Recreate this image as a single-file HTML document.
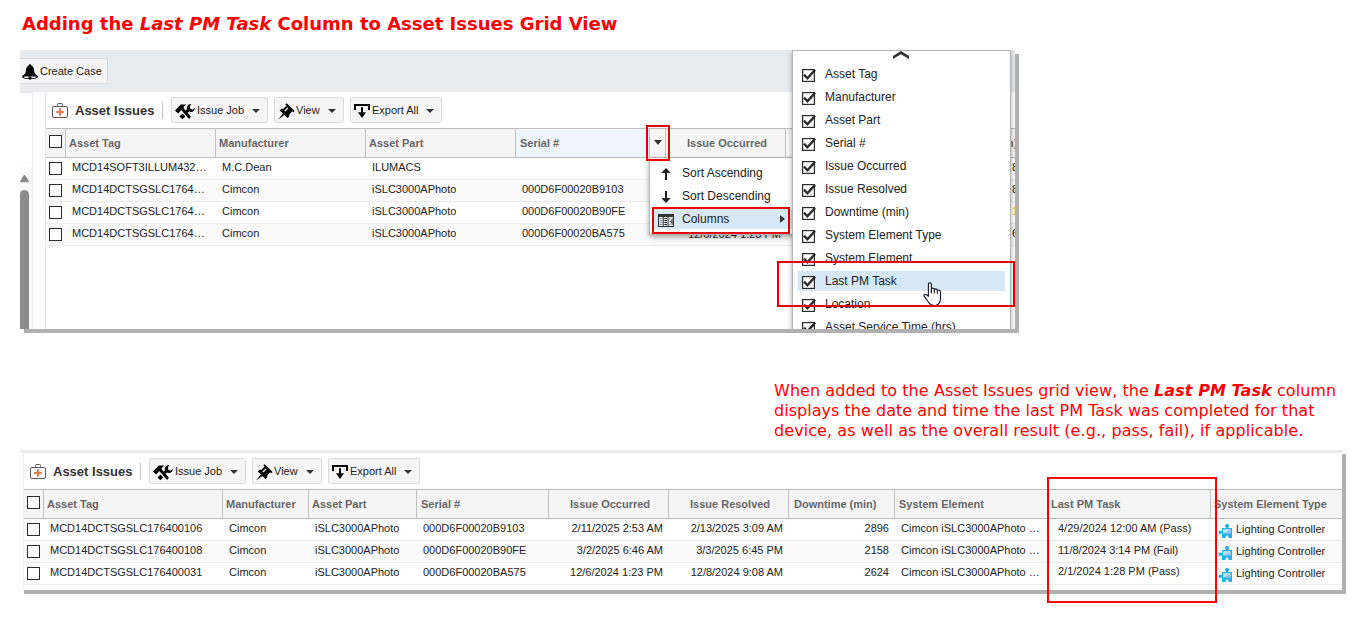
<!DOCTYPE html>
<html lang="en">
<head>
<meta charset="utf-8">
<title>Adding the Last PM Task Column to Asset Issues Grid View</title>
<style>
*{box-sizing:border-box}
html,body{margin:0;padding:0;background:#fff}
body{width:1362px;height:622px;position:relative;overflow:hidden;font-family:"Liberation Sans",sans-serif;font-size:11px;color:#222}
.abs{position:absolute}
h1{position:absolute;left:22px;top:13px;margin:0;font:bold 18px/22px "DejaVu Sans",sans-serif;color:#f00;white-space:nowrap}
.note{position:absolute;left:774px;top:381px;margin:0;font:16px/20px "DejaVu Sans",sans-serif;color:#f00;white-space:nowrap;letter-spacing:.05px}
.shot{position:absolute;background:#fff;overflow:hidden}
.shadow{position:absolute;background:#b0b0b0}
.btn{position:absolute;height:26px;border:1px solid #dadada;border-radius:2.5px;background:#f5f5f5;font-size:11px;line-height:24px;color:#222;white-space:nowrap}
.btn span{position:absolute;top:0}
.caret{position:absolute;width:0;height:0;border-left:4px solid transparent;border-right:4px solid transparent;border-top:4.5px solid #333}
.title{position:absolute;font:bold 13px/16px "Liberation Sans",sans-serif;color:#333;white-space:nowrap}
.sep{position:absolute;width:1px;background:#c4c4c4}
.hdr{position:absolute;height:30px;background:#f5f5f5;border-top:1px solid #bdbdbd;border-bottom:1px solid #bdbdbd}
.th{position:absolute;top:0;height:28px;border-left:1px solid #c0c0c0;font:bold 11px/29px "Liberation Sans",sans-serif;color:#666;white-space:nowrap;padding-left:3px;overflow:hidden}
.row{position:absolute;height:22px;border-bottom:1px solid #ebebeb;background:#fff}
.row.alt{background:#fafafa}
.td{position:absolute;top:0;height:21px;font:11px/18px "Liberation Sans",sans-serif;color:#222;white-space:nowrap;overflow:hidden}
.td.r{text-align:right}
.cb{position:absolute;width:13px;height:13px;border:1.2px solid #2b2b2b;background:#fff}
.menu{position:absolute;background:#fff;border:1px solid #b4b4b4;box-shadow:0 2px 5px rgba(0,0,0,.35)}
.mi{position:absolute;font:12px/16px "Liberation Sans",sans-serif;color:#222;white-space:nowrap}
.red{position:absolute;border:2px solid #e60000}
</style>
</head>
<body>
<h1>Adding the <i>Last PM Task</i> Column to Asset Issues Grid View</h1>

<div class="shadow" style="left:24px;top:54px;width:995px;height:279px"></div>
<div class="shot" style="left:20px;top:50px;width:995px;height:279px">
    <div class="abs" style="left:0;top:0;width:995px;height:42px;background:#e9ecef"></div>
  <div class="btn" style="left:-3px;top:8px;width:91px"><svg class="abs" style="left:4px;top:5px" width="16" height="16" viewBox="0 0 16 16"><ellipse cx="8" cy="12.7" rx="8" ry="2.4" fill="#000"/><ellipse cx="8" cy="12.9" rx="6.5" ry="1.4" fill="#f5f5f5"/><path d="M8 .2C7.2.2 6.7.8 6.7 1.5 5 2.1 4.1 3.8 4 6 3.9 8.7 2.9 10.6.3 12 2.5 12.3 5 12.6 8 12.6S13.5 12.3 15.7 12C13.1 10.6 12.1 8.7 12 6 11.9 3.8 11 2.1 9.3 1.5 9.3.8 8.8.2 8 .2Z" fill="#000"/><circle cx="8" cy="14.1" r="1.7" fill="#000"/></svg><span style="left:22px">Create Case</span></div>
  <div class="abs" style="left:0;top:117px;width:12px;height:162px;background:#fafafa"></div>
  <div class="abs" style="left:12px;top:42px;width:1px;height:237px;background:#eeeeee"></div>
  <div class="abs" style="left:0;top:42px;width:12px;height:1px;background:#dedede"></div>
  <div class="abs" style="left:25px;top:42px;width:1px;height:237px;background:#e6e6e6"></div>
  <svg class="abs" style="left:32px;top:53px" width="16" height="15" viewBox="0 0 16 15"><rect x="5.5" y=".5" width="5" height="3" rx=".8" fill="none" stroke="#5a5a5a" stroke-width="1"/><rect x=".5" y="3.5" width="15" height="11" rx="1.5" fill="#fff" stroke="#5a5a5a" stroke-width="1"/><path d="M8 5.2v7.6M4.2 9h7.6" stroke="#e87a45" stroke-width="2"/></svg>
  <div class="title" style="left:55px;top:53px">Asset Issues</div>
  <div class="sep" style="left:142px;top:52px;height:17px"></div>
  <div class="btn" style="left:151px;top:47px;width:97px"><svg class="abs" style="left:3px;top:6px" width="20" height="16" viewBox="0 0 20 16"><path d="M0 6.6 5.8.5 11.2.4 9.2 2.5 8.5 4 15.9 12.7 14.1 14.9 6.3 6 3.2 9.4Z" fill="#000"/><path d="M16.2.1C13.7 0 11.8 1.8 11.8 4 11.8 4.5 11.9 4.9 12 5.3L10.4 6.9 12.4 9.1 14.1 7.5C14.6 7.8 15.3 8 16 8 18.1 8 19.8 6.2 19.9 3.7L17.7 5.7 15.3 4.7 15 2.3Z" fill="#000"/><path d="M7.4 9.5 10.3 12.4 7.4 15.3 4.5 12.4Z" fill="#000"/></svg><span style="left:25px">Issue Job</span><i class="caret" style="left:80px;top:11px"></i></div>
  <div class="btn" style="left:254px;top:47px;width:70px"><svg class="abs" style="left:3px;top:5px" width="17" height="17" viewBox="0 0 17 17"><path d="M8.6.2 16.6 7.9 15.3 9.2 14.2 8.3 11.2 11.5 11.3 13.3 9.6 15 6.4 11.9.1 16.5 4.9 10.5 1.7 7.4 3.5 5.7 5.4 5.8 8.5 2.7 7.3 1.5Z" fill="#000"/><path d="M6.9 8 10 4.9" stroke="#f5f5f5" stroke-width="1.3"/></svg><span style="left:21px">View</span><i class="caret" style="left:53px;top:11px"></i></div>
  <div class="btn" style="left:330px;top:47px;width:92px"><svg class="abs" style="left:3px;top:6px" width="16" height="14" viewBox="0 0 16 14"><path d="M1 6V1H15V6" fill="none" stroke="#000" stroke-width="2"/><path d="M8 3.3V9" stroke="#000" stroke-width="2"/><path d="M4 8.2H12L8 13.9Z" fill="#000"/></svg><span style="left:21px">Export All</span><i class="caret" style="left:75px;top:11px"></i></div>
  <div class="hdr" style="left:26px;top:78px;width:969px"><div class="cb" style="left:3px;top:6px"></div><div class="th" style="left:19px;width:150px">Asset Tag</div><div class="th" style="left:169px;width:150px">Manufacturer</div><div class="th" style="left:319px;width:150px">Asset Part</div><div class="th" style="left:469px;width:134px;background:#eef5fc;padding-left:4px">Serial #</div><div class="th" style="left:603px;width:17px;background:#f5f5f5;border-left:1px solid #c0c0c0;padding:0"><i class="caret" style="left:4px;top:11px;border-top-width:5.5px"></i></div><div class="th" style="left:619px;width:120px;padding-left:21px">Issue Occurred</div><div class="th" style="left:739px;width:120px;padding-left:21px">Issue Resolved</div><div class="th" style="left:859px;width:110px;padding:0 0 0 29px">Downtime (min)</div></div>
  <div class="row" style="left:26px;top:108px;width:969px"><div class="cb" style="left:3px;top:4px"></div><div class="td" style="left:26px">MCD14SOFT3ILLUM432…</div><div class="td" style="left:176px">M.C.Dean</div><div class="td" style="left:326px">ILUMACS</div><div class="td" style="left:966px">8</div></div>
  <div class="row alt" style="left:26px;top:130px;width:969px"><div class="cb" style="left:3px;top:4px"></div><div class="td" style="left:26px">MCD14DCTSGSLC1764…</div><div class="td" style="left:176px">Cimcon</div><div class="td" style="left:326px">iSLC3000APhoto</div><div class="td" style="left:476px">000D6F00020B9103</div><div class="td" style="left:966px">8</div></div>
  <div class="row" style="left:26px;top:152px;width:969px"><div class="cb" style="left:3px;top:4px"></div><div class="td" style="left:26px">MCD14DCTSGSLC1764…</div><div class="td" style="left:176px">Cimcon</div><div class="td" style="left:326px">iSLC3000APhoto</div><div class="td" style="left:476px">000D6F00020B90FE</div><div class="td" style="left:966px;color:#f0a030">1</div></div>
  <div class="row alt" style="left:26px;top:174px;width:969px"><div class="cb" style="left:3px;top:4px"></div><div class="td" style="left:26px">MCD14DCTSGSLC1764…</div><div class="td" style="left:176px">Cimcon</div><div class="td" style="left:326px">iSLC3000APhoto</div><div class="td" style="left:476px">000D6F00020BA575</div><div class="td r" style="left:621px;width:114px;top:1px">12/6/2024 1:23 PM</div><div class="td" style="left:966px">6</div></div>
  <div class="abs" style="left:0;top:140px;width:9px;height:140px;background:#8b8b8b;border-radius:4.5px 4.5px 0 0"></div>
  <svg class="abs" style="left:0;top:124px" width="10" height="9" viewBox="0 0 10 9"><path d="M4.5 2.2 7.7 7.1H1.3Z" fill="#8b8b8b" stroke="#8b8b8b" stroke-width="2.2" stroke-linejoin="round"/></svg>
  <div class="menu" style="left:629px;top:108px;width:150px;height:77px;border-top-color:#fff"><svg class="abs" style="left:11px;top:9px" width="10" height="12" viewBox="0 0 10 12"><path d="M5 0 9.8 5H6V12H4V5H.2Z" fill="#222"/></svg><svg class="abs" style="left:11px;top:32px" width="10" height="12" viewBox="0 0 10 12"><path d="M5 12 9.8 7H6V0H4V7H.2Z" fill="#222"/></svg><div class="mi" style="left:32px;top:6px">Sort Ascending</div><div class="mi" style="left:32px;top:29px">Sort Descending</div><div class="abs" style="left:3px;top:50px;width:146px;height:20px;background:#d6e7f6"></div><svg class="abs" style="left:8px;top:55px" width="16" height="13" viewBox="0 0 16 13"><rect x="0" y="0" width="16" height="13" fill="#333"/><rect x="1" y="3" width="3.8" height="9" fill="#e4eef8"/><rect x="5.8" y="3" width="3.8" height="9" fill="#e4eef8"/><rect x="10.6" y="3" width="4.4" height="9" fill="#e4eef8"/><path d="M1.5 4.5h3M1.5 6.5h3M1.5 8.5h3M1.5 10.5h3" stroke="#777" stroke-width=".8"/><path d="M6.3 4.5h2.8M6.3 6.5h2.8M6.3 8.5h2.8M6.3 10.5h2.8" stroke="#222" stroke-width="1"/><path d="M13.6 5.2 12 7.5 13.6 9.8Z" fill="#333"/><path d="M14.2 4.2v6.6" stroke="#444" stroke-width=".9"/><path d="M11 4.5h1.5M11 10.5h1.5" stroke="#999" stroke-width=".8"/></svg><div class="mi" style="left:32px;top:52px">Columns</div><div class="abs" style="left:130px;top:56px;width:0;height:0;border-top:4px solid transparent;border-bottom:4px solid transparent;border-left:5px solid #333"></div></div>
  <div class="red" style="left:626px;top:75px;width:24px;height:36px"></div>
  <div class="red" style="left:632px;top:157px;width:138px;height:27px"></div>
  <div class="menu" style="left:772px;top:0;width:219px;height:300px;border-bottom:0"><svg class="abs" style="left:99px;top:-1px" width="18" height="10" viewBox="0 0 18 10"><path d="M1 6.1 8.9.9 17.1 6.1V9.1L8.9 4.2 1 9.1Z" fill="#333"/></svg><svg class="abs" style="left:9px;top:18px;overflow:visible" width="14" height="14" viewBox="0 0 14 14"><rect x=".6" y=".6" width="11.8" height="11.8" fill="#fff" stroke="#2b2b2b" stroke-width="1.2"/><path d="M2 5.6 5.4 9.3 13.1.9" fill="none" stroke="#2b2b2b" stroke-width="2.3"/></svg><div class="mi" style="left:32px;top:15px">Asset Tag</div><svg class="abs" style="left:9px;top:41px;overflow:visible" width="14" height="14" viewBox="0 0 14 14"><rect x=".6" y=".6" width="11.8" height="11.8" fill="#fff" stroke="#2b2b2b" stroke-width="1.2"/><path d="M2 5.6 5.4 9.3 13.1.9" fill="none" stroke="#2b2b2b" stroke-width="2.3"/></svg><div class="mi" style="left:32px;top:38px">Manufacturer</div><svg class="abs" style="left:9px;top:64px;overflow:visible" width="14" height="14" viewBox="0 0 14 14"><rect x=".6" y=".6" width="11.8" height="11.8" fill="#fff" stroke="#2b2b2b" stroke-width="1.2"/><path d="M2 5.6 5.4 9.3 13.1.9" fill="none" stroke="#2b2b2b" stroke-width="2.3"/></svg><div class="mi" style="left:32px;top:61px">Asset Part</div><svg class="abs" style="left:9px;top:87px;overflow:visible" width="14" height="14" viewBox="0 0 14 14"><rect x=".6" y=".6" width="11.8" height="11.8" fill="#fff" stroke="#2b2b2b" stroke-width="1.2"/><path d="M2 5.6 5.4 9.3 13.1.9" fill="none" stroke="#2b2b2b" stroke-width="2.3"/></svg><div class="mi" style="left:32px;top:84px">Serial #</div><svg class="abs" style="left:9px;top:110px;overflow:visible" width="14" height="14" viewBox="0 0 14 14"><rect x=".6" y=".6" width="11.8" height="11.8" fill="#fff" stroke="#2b2b2b" stroke-width="1.2"/><path d="M2 5.6 5.4 9.3 13.1.9" fill="none" stroke="#2b2b2b" stroke-width="2.3"/></svg><div class="mi" style="left:32px;top:107px">Issue Occurred</div><svg class="abs" style="left:9px;top:133px;overflow:visible" width="14" height="14" viewBox="0 0 14 14"><rect x=".6" y=".6" width="11.8" height="11.8" fill="#fff" stroke="#2b2b2b" stroke-width="1.2"/><path d="M2 5.6 5.4 9.3 13.1.9" fill="none" stroke="#2b2b2b" stroke-width="2.3"/></svg><div class="mi" style="left:32px;top:130px">Issue Resolved</div><svg class="abs" style="left:9px;top:156px;overflow:visible" width="14" height="14" viewBox="0 0 14 14"><rect x=".6" y=".6" width="11.8" height="11.8" fill="#fff" stroke="#2b2b2b" stroke-width="1.2"/><path d="M2 5.6 5.4 9.3 13.1.9" fill="none" stroke="#2b2b2b" stroke-width="2.3"/></svg><div class="mi" style="left:32px;top:153px">Downtime (min)</div><svg class="abs" style="left:9px;top:179px;overflow:visible" width="14" height="14" viewBox="0 0 14 14"><rect x=".6" y=".6" width="11.8" height="11.8" fill="#fff" stroke="#2b2b2b" stroke-width="1.2"/><path d="M2 5.6 5.4 9.3 13.1.9" fill="none" stroke="#2b2b2b" stroke-width="2.3"/></svg><div class="mi" style="left:32px;top:176px">System Element Type</div><svg class="abs" style="left:9px;top:202px;overflow:visible" width="14" height="14" viewBox="0 0 14 14"><rect x=".6" y=".6" width="11.8" height="11.8" fill="#fff" stroke="#2b2b2b" stroke-width="1.2"/><path d="M2 5.6 5.4 9.3 13.1.9" fill="none" stroke="#2b2b2b" stroke-width="2.3"/></svg><div class="mi" style="left:32px;top:199px">System Element</div><div class="abs" style="left:5px;top:220px;width:207px;height:20px;background:#d6e7f6"></div><svg class="abs" style="left:9px;top:225px;overflow:visible" width="14" height="14" viewBox="0 0 14 14"><rect x=".6" y=".6" width="11.8" height="11.8" fill="#fff" stroke="#2b2b2b" stroke-width="1.2"/><path d="M2 5.6 5.4 9.3 13.1.9" fill="none" stroke="#2b2b2b" stroke-width="2.3"/></svg><div class="mi" style="left:32px;top:222px">Last PM Task</div><svg class="abs" style="left:9px;top:248px;overflow:visible" width="14" height="14" viewBox="0 0 14 14"><rect x=".6" y=".6" width="11.8" height="11.8" fill="#fff" stroke="#2b2b2b" stroke-width="1.2"/><path d="M2 5.6 5.4 9.3 13.1.9" fill="none" stroke="#2b2b2b" stroke-width="2.3"/></svg><div class="mi" style="left:32px;top:245px">Location</div><svg class="abs" style="left:9px;top:271px;overflow:visible" width="14" height="14" viewBox="0 0 14 14"><rect x=".6" y=".6" width="11.8" height="11.8" fill="#fff" stroke="#2b2b2b" stroke-width="1.2"/><path d="M2 5.6 5.4 9.3 13.1.9" fill="none" stroke="#2b2b2b" stroke-width="2.3"/></svg><div class="mi" style="left:32px;top:268px">Asset Service Time (hrs)</div><svg class="abs" style="left:130px;top:231px" width="19" height="25" viewBox="0 0 19 25"><path d="M5.4 13.3V2.4C5.4 1.5 6.1.8 6.9.8S8.4 1.5 8.4 2.4V9.7 6.5C9.3 6 10.2 6.1 11 6.6L11.3 7.2C12.2 6.8 13.2 6.9 14 7.5L14.3 8.1C15.5 7.7 17.4 8.2 17.5 9.8V16.8C17.5 20.7 14.9 23.7 11.5 23.7 8.6 23.7 7.1 22.7 5.7 20.5L1.1 14.2C.4 13.2 1.2 12.2 2.3 12.3 3.3 12.3 4.3 12.8 5.4 14.3Z" fill="#fff" stroke="#1a1a2e" stroke-width="1.15" stroke-linejoin="round"/><path d="M8.4 6.5V11.3M11.3 7.2V11.5M14.3 8.1V11.7" fill="none" stroke="#1a1a2e" stroke-width="1.1"/></svg></div>
</div>
<div class="red" style="left:777px;top:261px;width:238px;height:46px"></div>

<p class="note"><span style="letter-spacing:.064px">When added to the Asset Issues grid view, the <b><i>Last PM Task</i></b> column</span><br><span style="letter-spacing:.03px">displays the date and time the last PM Task was completed for that</span><br><span style="letter-spacing:.08px">device, as well as the overall result (e.g., pass, fail), if applicable.</span></p>

<div class="shadow" style="left:24px;top:454px;width:1322px;height:140px"></div>
<div class="shot" style="left:20px;top:450px;width:1322px;height:140px">
    <div class="abs" style="left:0;top:0;width:1322px;height:3px;background:#e9ecef"></div>
  <div class="abs" style="left:3px;top:3px;width:1px;height:137px;background:#f0f0f0"></div>
  <svg class="abs" style="left:10px;top:14px" width="16" height="15" viewBox="0 0 16 15"><rect x="5.5" y=".5" width="5" height="3" rx=".8" fill="none" stroke="#5a5a5a" stroke-width="1"/><rect x=".5" y="3.5" width="15" height="11" rx="1.5" fill="#fff" stroke="#5a5a5a" stroke-width="1"/><path d="M8 5.2v7.6M4.2 9h7.6" stroke="#e87a45" stroke-width="2"/></svg>
  <div class="title" style="left:33px;top:14px">Asset Issues</div>
  <div class="sep" style="left:120px;top:13px;height:17px"></div>
  <div class="btn" style="left:129px;top:8px;width:97px"><svg class="abs" style="left:3px;top:6px" width="20" height="16" viewBox="0 0 20 16"><path d="M0 6.6 5.8.5 11.2.4 9.2 2.5 8.5 4 15.9 12.7 14.1 14.9 6.3 6 3.2 9.4Z" fill="#000"/><path d="M16.2.1C13.7 0 11.8 1.8 11.8 4 11.8 4.5 11.9 4.9 12 5.3L10.4 6.9 12.4 9.1 14.1 7.5C14.6 7.8 15.3 8 16 8 18.1 8 19.8 6.2 19.9 3.7L17.7 5.7 15.3 4.7 15 2.3Z" fill="#000"/><path d="M7.4 9.5 10.3 12.4 7.4 15.3 4.5 12.4Z" fill="#000"/></svg><span style="left:25px">Issue Job</span><i class="caret" style="left:80px;top:11px"></i></div>
  <div class="btn" style="left:232px;top:8px;width:70px"><svg class="abs" style="left:3px;top:5px" width="17" height="17" viewBox="0 0 17 17"><path d="M8.6.2 16.6 7.9 15.3 9.2 14.2 8.3 11.2 11.5 11.3 13.3 9.6 15 6.4 11.9.1 16.5 4.9 10.5 1.7 7.4 3.5 5.7 5.4 5.8 8.5 2.7 7.3 1.5Z" fill="#000"/><path d="M6.9 8 10 4.9" stroke="#f5f5f5" stroke-width="1.3"/></svg><span style="left:21px">View</span><i class="caret" style="left:53px;top:11px"></i></div>
  <div class="btn" style="left:308px;top:8px;width:92px"><svg class="abs" style="left:3px;top:6px" width="16" height="14" viewBox="0 0 16 14"><path d="M1 6V1H15V6" fill="none" stroke="#000" stroke-width="2"/><path d="M8 3.3V9" stroke="#000" stroke-width="2"/><path d="M4 8.2H12L8 13.9Z" fill="#000"/></svg><span style="left:21px">Export All</span><i class="caret" style="left:75px;top:11px"></i></div>
  <div class="hdr" style="left:4px;top:39px;width:1318px"><div class="cb" style="left:3px;top:6px"></div><div class="th" style="left:19px;width:179px;padding-left:3px">Asset Tag</div><div class="th" style="left:198px;width:86px;padding-left:3px">Manufacturer</div><div class="th" style="left:284px;width:108px;padding-left:3px">Asset Part</div><div class="th" style="left:392px;width:132px;padding-left:4px">Serial #</div><div class="th" style="left:524px;width:120px;padding-left:21px">Issue Occurred</div><div class="th" style="left:644px;width:120px;padding-left:21px">Issue Resolved</div><div class="th" style="left:764px;width:106px;padding-left:5px">Downtime (min)</div><div class="th" style="left:870px;width:153px;padding-left:4px">System Element</div><div class="th" style="left:1023px;width:163px;padding-left:3px">Last PM Task</div><div class="th" style="left:1186px;width:132px;padding-left:3px">System Element Type</div></div>
  <div class="row" style="left:4px;top:69px;width:1318px"><div class="cb" style="left:3px;top:4px"></div><div class="td" style="left:26px">MCD14DCTSGSLC176400106</div><div class="td" style="left:205px">Cimcon</div><div class="td" style="left:291px">iSLC3000APhoto</div><div class="td" style="left:399px">000D6F00020B9103</div><div class="td r" style="left:525px;width:114px">2/11/2025 2:53 AM</div><div class="td r" style="left:645px;width:114px">2/13/2025 3:09 AM</div><div class="td r" style="left:765px;width:100px">2896</div><div class="td" style="left:877px">Cimcon iSLC3000APhoto …</div><div class="td" style="left:1034px">4/29/2024 12:00 AM (Pass)</div><div class="td" style="left:1212px;top:1px">Lighting Controller</div><svg class="abs" style="left:1194px;top:5px" width="14" height="14" viewBox="0 0 14 14"><path d="M4 3.9H8V3.5A1.95 1.95 0 1 1 10.2 3.5V3.9H14V14H10.4V12.9A1.35 1.35 0 0 0 7.7 12.9V14H4V9.5H3.1A1.6 1.6 0 1 1 3.1 7.1H4Z" fill="#27aee4"/><path d="M5.2 5.3H13V9.6H5.2Z" fill="#8ccbee"/><path d="M5.2 5.3H13L5.2 9.6Z" fill="#bfe1f5"/></svg></div>
  <div class="row alt" style="left:4px;top:91px;width:1318px"><div class="cb" style="left:3px;top:4px"></div><div class="td" style="left:26px">MCD14DCTSGSLC176400108</div><div class="td" style="left:205px">Cimcon</div><div class="td" style="left:291px">iSLC3000APhoto</div><div class="td" style="left:399px">000D6F00020B90FE</div><div class="td r" style="left:525px;width:114px">3/2/2025 6:46 AM</div><div class="td r" style="left:645px;width:114px">3/3/2025 6:45 PM</div><div class="td r" style="left:765px;width:100px">2158</div><div class="td" style="left:877px">Cimcon iSLC3000APhoto …</div><div class="td" style="left:1034px">11/8/2024 3:14 PM (Fail)</div><div class="td" style="left:1212px;top:1px">Lighting Controller</div><svg class="abs" style="left:1194px;top:5px" width="14" height="14" viewBox="0 0 14 14"><path d="M4 3.9H8V3.5A1.95 1.95 0 1 1 10.2 3.5V3.9H14V14H10.4V12.9A1.35 1.35 0 0 0 7.7 12.9V14H4V9.5H3.1A1.6 1.6 0 1 1 3.1 7.1H4Z" fill="#27aee4"/><path d="M5.2 5.3H13V9.6H5.2Z" fill="#8ccbee"/><path d="M5.2 5.3H13L5.2 9.6Z" fill="#bfe1f5"/></svg></div>
  <div class="row" style="left:4px;top:113px;width:1318px"><div class="cb" style="left:3px;top:4px"></div><div class="td" style="left:26px">MCD14DCTSGSLC176400031</div><div class="td" style="left:205px">Cimcon</div><div class="td" style="left:291px">iSLC3000APhoto</div><div class="td" style="left:399px">000D6F00020BA575</div><div class="td r" style="left:525px;width:114px">12/6/2024 1:23 PM</div><div class="td r" style="left:645px;width:114px">12/8/2024 9:08 AM</div><div class="td r" style="left:765px;width:100px">2624</div><div class="td" style="left:877px">Cimcon iSLC3000APhoto …</div><div class="td" style="left:1034px;top:-1px">2/1/2024 1:28 PM (Pass)</div><div class="td" style="left:1212px;top:1px">Lighting Controller</div><svg class="abs" style="left:1194px;top:5px" width="14" height="14" viewBox="0 0 14 14"><path d="M4 3.9H8V3.5A1.95 1.95 0 1 1 10.2 3.5V3.9H14V14H10.4V12.9A1.35 1.35 0 0 0 7.7 12.9V14H4V9.5H3.1A1.6 1.6 0 1 1 3.1 7.1H4Z" fill="#27aee4"/><path d="M5.2 5.3H13V9.6H5.2Z" fill="#8ccbee"/><path d="M5.2 5.3H13L5.2 9.6Z" fill="#bfe1f5"/></svg></div>
</div>
<div class="red" style="left:1047px;top:477px;width:170px;height:126px;border-color:#f00"></div>
</body>
</html>
